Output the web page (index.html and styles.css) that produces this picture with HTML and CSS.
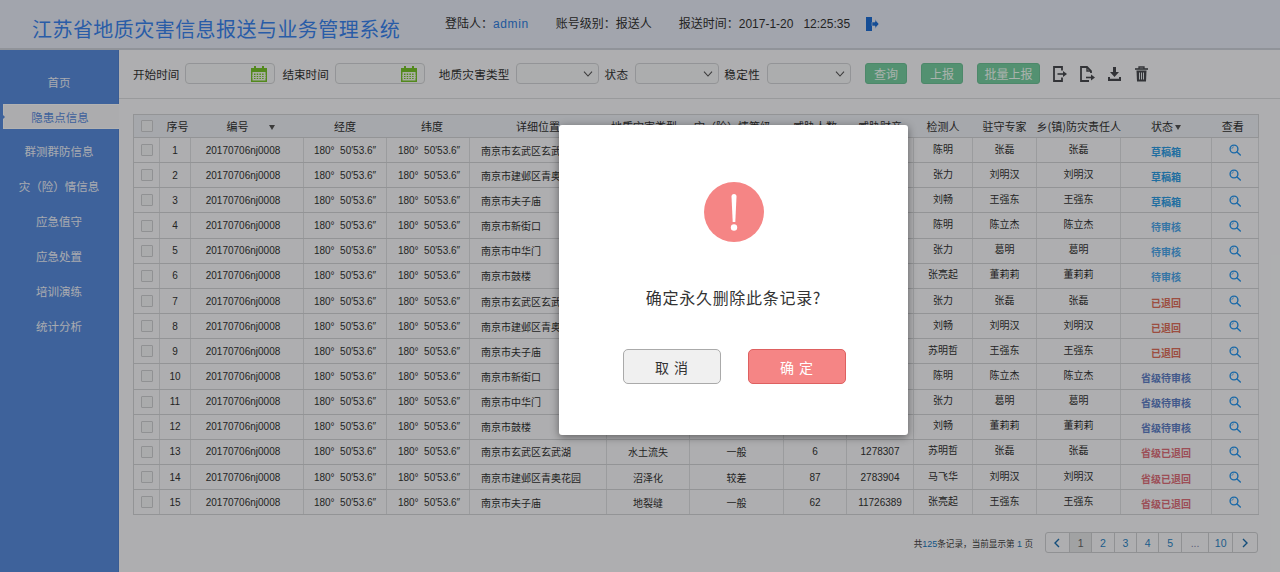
FILE: index.html
```html
<!DOCTYPE html>
<html lang="zh-CN">
<head>
<meta charset="utf-8">
<title>江苏省地质灾害信息报送与业务管理系统</title>
<link rel="stylesheet" href="styles.css">
</head>
<body>
<div class="page">
  <header class="top">
    <h1 class="title">江苏省地质灾害信息报送与业务管理系统</h1>
    <div class="meta tight">登陆人：<span class="blue">admin</span></div>
    <div class="meta tight">账号级别：报送人</div>
    <div class="meta">报送时间：2017-1-20&nbsp;&nbsp;&nbsp;12:25:35</div>
    <svg class="logout" viewBox="0 0 14 14" width="14" height="14"><path d="M1 0h6v14H1z" fill="#1f6fd6"/><path d="M7 5h3V2.500L14 7l-4 4.500V9H7z" fill="#1f6fd6" stroke="#e9edf8" stroke-width=".6"/></svg>
  </header>
  <div class="body">
    <nav class="side">
      <a class="item">首页</a>
      <a class="item active">隐患点信息</a>
      <a class="item">群测群防信息</a>
      <a class="item">灾（险）情信息</a>
      <a class="item">应急值守</a>
      <a class="item">应急处置</a>
      <a class="item">培训演练</a>
      <a class="item">统计分析</a>
    </nav>
    <main class="main">
      <div class="tools">
        <label class="lbl">开始时间</label>
        <div class="field date"><svg class="cal" viewBox="0 0 16 16" width="16" height="16"><use href="#cal"/></svg></div>
        <label class="lbl">结束时间</label>
        <div class="field date"><svg class="cal" viewBox="0 0 16 16" width="16" height="16"><use href="#cal"/></svg></div>
        <label class="lbl wide">地质灾害类型</label>
        <div class="field sel"><svg class="chev" viewBox="0 0 10 6" width="10" height="6"><path d="M1 .7 5 5 9 .7" fill="none" stroke="#555" stroke-width="1.100"/></svg></div>
        <label class="lbl">状态</label>
        <div class="field sel"><svg class="chev" viewBox="0 0 10 6" width="10" height="6"><path d="M1 .7 5 5 9 .7" fill="none" stroke="#555" stroke-width="1.100"/></svg></div>
        <label class="lbl">稳定性</label>
        <div class="field sel"><svg class="chev" viewBox="0 0 10 6" width="10" height="6"><path d="M1 .7 5 5 9 .7" fill="none" stroke="#555" stroke-width="1.100"/></svg></div>
        <button class="btn first">查询</button>
        <button class="btn">上报</button>
        <button class="btn long">批量上报</button>
        <svg class="tool" viewBox="0 0 15 16" width="15" height="16"><path d="M9 4.500V1H1v14h8v-3.500" fill="none" stroke="#484a4f" stroke-width="1.800"/><path d="M4.500 8H12" stroke="#484a4f" stroke-width="1.600"/><path d="m10 5 4 3-4 3z" fill="#484a4f"/></svg>
        <svg class="tool" viewBox="0 0 15 16" width="15" height="16"><path d="M9 15H1V1h6l4 4v2" fill="none" stroke="#484a4f" stroke-width="1.800"/><path d="M7 1v4h4" fill="none" stroke="#484a4f" stroke-width="1.400"/><path d="M6 11.500h6" stroke="#484a4f" stroke-width="1.600"/><path d="m11 8.500 4 3-4 3z" fill="#484a4f"/></svg>
        <svg class="tool" viewBox="0 0 15 16" width="15" height="16"><path d="M6 1h3v5h3l-4.500 5L3 6h3z" fill="#484a4f"/><path d="M1 11v4h13v-4h-2v1.800H3V11z" fill="#484a4f"/></svg>
        <svg class="tool" viewBox="0 0 15 16" width="15" height="16"><path d="M1 3h13" stroke="#484a4f" stroke-width="1.600"/><path d="M5 3V1h5v2" fill="none" stroke="#484a4f" stroke-width="1.300"/><path d="M2.500 4.500h10L12 15.500H3z" fill="#484a4f"/><path d="M5.500 6.500v7M7.500 6.500v7M9.500 6.500v7" stroke="#e9edf0" stroke-width="1"/></svg>
      </div>
      <div class="content">
        <table class="grid">
          <colgroup>
            <col class="c1"><col class="c2"><col class="c3"><col class="c4"><col class="c5"><col class="c6"><col class="c7"><col class="c8"><col class="c9"><col class="c10"><col class="c11"><col class="c12"><col class="c13"><col class="c14"><col class="c15">
          </colgroup>
          <thead>
            <tr>
              <th><span class="check"></span></th><th class="h-seq">序号</th><th><span class="gap-arrow">编号</span><i class="arrow"></i></th><th>经度</th><th class="h-lat">纬度</th><th>详细位置</th><th>地质灾害类型<i class="arrow near"></i></th><th>灾（险）情等级<i class="arrow near"></i></th><th>威胁人数</th><th>威胁财产</th><th>检测人</th><th>驻守专家</th><th>乡(镇)防灾责任人</th><th>状态<i class="arrow near"></i></th><th class="h-view">查看</th>
            </tr>
          </thead>
          <tbody>
            <tr><td><span class="check"></span></td><td>1</td><td>20170706nj0008</td><td>180° &nbsp;50′53.6″</td><td>180° &nbsp;50′53.6″</td><td>南京市玄武区玄武湖</td><td>水土流失</td><td>一般</td><td>6</td><td>1278307</td><td>陈明</td><td>张磊</td><td>张磊</td><td class="s1">草稿箱</td><td><svg class="find"><use href="#find"/></svg></td></tr>
            <tr><td><span class="check"></span></td><td>2</td><td>20170706nj0008</td><td>180° &nbsp;50′53.6″</td><td>180° &nbsp;50′53.6″</td><td>南京市建邺区青奥花园</td><td>沼泽化</td><td>较差</td><td>87</td><td>2783904</td><td>张力</td><td>刘明汉</td><td>刘明汉</td><td class="s1">草稿箱</td><td><svg class="find"><use href="#find"/></svg></td></tr>
            <tr><td><span class="check"></span></td><td>3</td><td>20170706nj0008</td><td>180° &nbsp;50′53.6″</td><td>180° &nbsp;50′53.6″</td><td>南京市夫子庙</td><td>地裂缝</td><td>一般</td><td>62</td><td>11726389</td><td>刘畅</td><td>王强东</td><td>王强东</td><td class="s1">草稿箱</td><td><svg class="find"><use href="#find"/></svg></td></tr>
            <tr><td><span class="check"></span></td><td>4</td><td>20170706nj0008</td><td>180° &nbsp;50′53.6″</td><td>180° &nbsp;50′53.6″</td><td>南京市新街口</td><td>水土流失</td><td>一般</td><td>6</td><td>1278307</td><td>陈明</td><td>陈立杰</td><td>陈立杰</td><td class="s2">待审核</td><td><svg class="find"><use href="#find"/></svg></td></tr>
            <tr><td><span class="check"></span></td><td>5</td><td>20170706nj0008</td><td>180° &nbsp;50′53.6″</td><td>180° &nbsp;50′53.6″</td><td>南京市中华门</td><td>沼泽化</td><td>较差</td><td>87</td><td>2783904</td><td>张力</td><td>葛明</td><td>葛明</td><td class="s2">待审核</td><td><svg class="find"><use href="#find"/></svg></td></tr>
            <tr><td><span class="check"></span></td><td>6</td><td>20170706nj0008</td><td>180° &nbsp;50′53.6″</td><td>180° &nbsp;50′53.6″</td><td>南京市鼓楼</td><td>地裂缝</td><td>一般</td><td>62</td><td>11726389</td><td>张亮起</td><td>董莉莉</td><td>董莉莉</td><td class="s2">待审核</td><td><svg class="find"><use href="#find"/></svg></td></tr>
            <tr><td><span class="check"></span></td><td>7</td><td>20170706nj0008</td><td>180° &nbsp;50′53.6″</td><td>180° &nbsp;50′53.6″</td><td>南京市玄武区玄武湖</td><td>水土流失</td><td>一般</td><td>6</td><td>1278307</td><td>张力</td><td>张磊</td><td>张磊</td><td class="s3">已退回</td><td><svg class="find"><use href="#find"/></svg></td></tr>
            <tr><td><span class="check"></span></td><td>8</td><td>20170706nj0008</td><td>180° &nbsp;50′53.6″</td><td>180° &nbsp;50′53.6″</td><td>南京市建邺区青奥花园</td><td>沼泽化</td><td>较差</td><td>87</td><td>2783904</td><td>刘畅</td><td>刘明汉</td><td>刘明汉</td><td class="s3">已退回</td><td><svg class="find"><use href="#find"/></svg></td></tr>
            <tr><td><span class="check"></span></td><td>9</td><td>20170706nj0008</td><td>180° &nbsp;50′53.6″</td><td>180° &nbsp;50′53.6″</td><td>南京市夫子庙</td><td>地裂缝</td><td>一般</td><td>62</td><td>11726389</td><td>苏明哲</td><td>王强东</td><td>王强东</td><td class="s3">已退回</td><td><svg class="find"><use href="#find"/></svg></td></tr>
            <tr><td><span class="check"></span></td><td>10</td><td>20170706nj0008</td><td>180° &nbsp;50′53.6″</td><td>180° &nbsp;50′53.6″</td><td>南京市新街口</td><td>水土流失</td><td>一般</td><td>6</td><td>1278307</td><td>陈明</td><td>陈立杰</td><td>陈立杰</td><td class="s4">省级待审核</td><td><svg class="find"><use href="#find"/></svg></td></tr>
            <tr><td><span class="check"></span></td><td>11</td><td>20170706nj0008</td><td>180° &nbsp;50′53.6″</td><td>180° &nbsp;50′53.6″</td><td>南京市中华门</td><td>沼泽化</td><td>较差</td><td>87</td><td>2783904</td><td>张力</td><td>葛明</td><td>葛明</td><td class="s4">省级待审核</td><td><svg class="find"><use href="#find"/></svg></td></tr>
            <tr><td><span class="check"></span></td><td>12</td><td>20170706nj0008</td><td>180° &nbsp;50′53.6″</td><td>180° &nbsp;50′53.6″</td><td>南京市鼓楼</td><td>地裂缝</td><td>一般</td><td>62</td><td>11726389</td><td>刘畅</td><td>董莉莉</td><td>董莉莉</td><td class="s4">省级待审核</td><td><svg class="find"><use href="#find"/></svg></td></tr>
            <tr><td><span class="check"></span></td><td>13</td><td>20170706nj0008</td><td>180° &nbsp;50′53.6″</td><td>180° &nbsp;50′53.6″</td><td>南京市玄武区玄武湖</td><td>水土流失</td><td>一般</td><td>6</td><td>1278307</td><td>苏明哲</td><td>张磊</td><td>张磊</td><td class="s5">省级已退回</td><td><svg class="find"><use href="#find"/></svg></td></tr>
            <tr><td><span class="check"></span></td><td>14</td><td>20170706nj0008</td><td>180° &nbsp;50′53.6″</td><td>180° &nbsp;50′53.6″</td><td>南京市建邺区青奥花园</td><td>沼泽化</td><td>较差</td><td>87</td><td>2783904</td><td>马飞华</td><td>刘明汉</td><td>刘明汉</td><td class="s5">省级已退回</td><td><svg class="find"><use href="#find"/></svg></td></tr>
            <tr><td><span class="check"></span></td><td>15</td><td>20170706nj0008</td><td>180° &nbsp;50′53.6″</td><td>180° &nbsp;50′53.6″</td><td>南京市夫子庙</td><td>地裂缝</td><td>一般</td><td>62</td><td>11726389</td><td>张亮起</td><td>王强东</td><td>王强东</td><td class="s5">省级已退回</td><td><svg class="find"><use href="#find"/></svg></td></tr>
          </tbody>
        </table>
        <div class="foot">
          <span class="count">共<b>125</b>条记录，当前显示第 <b>1</b> 页</span>
          <div class="pager">
            <a class="pg w24"><svg viewBox="0 0 8 10" width="8" height="10"><path d="M6 1 2 5l4 4" fill="none" stroke="#1c6fb0" stroke-width="1.400"/></svg></a>
            <a class="pg on">1</a><a class="pg">2</a><a class="pg">3</a><a class="pg">4</a><a class="pg">5</a><a class="pg dots">...</a><a class="pg w24">10</a>
            <a class="pg w24"><svg viewBox="0 0 8 10" width="8" height="10"><path d="m2 1 4 4-4 4" fill="none" stroke="#1c6fb0" stroke-width="1.400"/></svg></a>
          </div>
        </div>
      </div>
    </main>
  </div>
  <svg class="defs" width="0" height="0">
    <defs>
      <symbol id="cal" viewBox="0 0 16 16">
        <path d="M0 2h16v14H0z" fill="#77c52a"/><path d="M3 0h2v3H3zM11 0h2v3h-2z" fill="#77c52a"/>
        <path d="M1.500 6h13v8.500h-13z" fill="#f3f8ea"/>
        <path d="M3 7.500h1.500V13H3zM5.700 7.500h1.500V13H5.700zM8.400 7.500h1.500V13H8.400zM11.100 7.500h1.500V13h-1.500z" fill="#77c52a"/>
        <path d="M1.500 9h13v1h-13zM1.500 11h13v1h-13z" fill="#f3f8ea"/>
      </symbol>
      <symbol id="find" viewBox="0 0 12 12">
        <circle cx="5" cy="5" r="3.900" fill="none" stroke="#2596f0" stroke-width="1.400"/>
        <path d="m8 8 3.300 3" stroke="#2596f0" stroke-width="1.400" stroke-linecap="round"/>
        <path d="M2.800 5a2.200 2.200 0 0 1 2.200-2.200" fill="none" stroke="#2596f0" stroke-width=".6"/>
      </symbol>
    </defs>
  </svg>
  <div class="mask">
    <div class="dialog">
      <svg class="warn" viewBox="0 0 60 60" width="60" height="60"><circle cx="30" cy="30" r="30" fill="#f58585"/><path d="M27.500 14.500a2.500 2.500 0 0 1 5 0L31.300 40h-2.600z" fill="#fff"/><circle cx="30" cy="45.500" r="3.200" fill="#fff"/></svg>
      <p class="ask">确定永久删除此条记录?</p>
      <div class="acts">
        <button class="dbtn cancel">取 消</button>
        <button class="dbtn ok">确 定</button>
      </div>
    </div>
  </div>
</div>
</body>
</html>
```

FILE: styles.css
```css
* { box-sizing: border-box; }
html, body { margin: 0; padding: 0; height: 100%; }
body {
  font-family: "Liberation Sans", "Noto Sans CJK SC", sans-serif;
  font-size: 12px;
  color: #333;
  overflow: hidden;
}
.page { position: relative; width: 1280px; height: 572px; overflow: hidden; background: #f9fafc; display: flex; flex-direction: column; }
.defs { position: absolute; }

.top {
  height: 50px;
  flex: none;
  background: #e9edf8;
  border-bottom: 2px solid #cfd3dc;
  display: flex;
  align-items: center;
  padding-left: 32px;
}
.title { margin: 10px 0 0; font-size: 20px; font-weight: 400; letter-spacing: .45px; color: #3b85f0; width: 413px; flex: none; font-family: "Noto Sans CJK SC", sans-serif; line-height: 30px; }
.meta { margin: 0 29px 0 0; font-size: 12px; line-height: 18px; color: #333; white-space: nowrap; }
.meta.tight { margin-right: 27px; }
.blue { color: #2f7fe0; letter-spacing: .6px; }
.logout { margin: 0 0 0 -14px; }

.body { flex: 1; display: flex; min-height: 0; }
.side { width: 119px; flex: none; background: #5a8ddf; padding-top: 14px; display: flex; flex-direction: column; border-right: 1px solid #5384d3; }
.item { height: 35px; display: flex; align-items: center; justify-content: center; color: #f0f4fb; font-size: 11.5px; }
.item.active {
  height: 25px;
  margin: 5px -1px 4px 3px;
  background: #f6f7f9;
  color: #5a8ddf;
  border: solid #fff;
  border-width: 1px 0 1px 1px;
  position: relative;
  padding-right: 3px;
}
.item.active::before {
  content: "";
  position: absolute;
  left: -2px;
  top: 9px;
  border: 3px solid transparent;
  border-left: 3px solid #5a8ddf;
}

.main { flex: 1; min-width: 0; display: flex; flex-direction: column; }
.tools {
  height: 49px;
  border-bottom: 1px solid #dcdde0;
  display: flex;
  align-items: center;
  padding: 0 0 1px 14px;
  flex: none;
}
.lbl { font-size: 11.6px; margin-right: 6px; white-space: nowrap; }
.lbl.wide { margin-left: 7px; letter-spacing: .2px; }
.sel + .lbl { letter-spacing: .3px; margin-right: 7px; }
.field { height: 21px; border: 1px solid #d3d5d8; border-radius: 4px; display: flex; align-items: center; justify-content: flex-end; background: #f7f8fa; flex: none; }
.date { width: 90px; padding-right: 7px; margin-right: 7px; }
.sel { width: 83.500px; padding-right: 5px; margin-right: 5.500px; }
.cal { display: block; }
.btn { height: 21px; width: 42px; border: 1px solid #6fc398; border-radius: 3px; background: #78d0a2; color: #f2fff8; font: 12px "Noto Sans CJK SC", sans-serif; padding: 0; margin-right: 14px; flex: none; }
.btn.first { margin-left: 9px; }
.btn.long { width: 63px; margin-right: 13px; }
.tool { margin-right: 12px; flex: none; }

.content { padding: 15px 22px 0 14px; }
.grid { width: 1125px; table-layout: fixed; border-collapse: collapse; border: 1px solid #d3d4d7; }
.c1 { width: 26px; } .c2 { width: 31px; } .c3 { width: 113px; } .c4 { width: 83px; } .c5 { width: 83px; }
.c6 { width: 137px; } .c7 { width: 83px; } .c8 { width: 94px; } .c9 { width: 63px; } .c10 { width: 67px; }
.c11 { width: 59px; } .c12 { width: 64px; } .c13 { width: 84px; } .c14 { width: 91px; } .c15 { width: 47px; }
.grid th { height: 23px; background: #eef1f7; font-weight: 400; font-size: 11px; border-bottom: 1px solid #d3d4d7; padding: 0; white-space: nowrap; color: #333; font-family: "Noto Sans CJK SC", sans-serif; }
.grid td { height: 25.170px; padding: 0; text-align: center; font-size: 10px; border-bottom: 1px solid #d3d4d7; border-right: 1px solid #dfe0e3; white-space: nowrap; overflow: hidden; color: #333; }
.grid td:nth-child(6) { text-align: left; padding-left: 11px; }
.grid td:nth-child(3) { padding-right: 8px; }
.grid td:nth-child(5) { padding-left: 2px; }
.grid td:nth-child(n+11):nth-child(-n+13) { padding-bottom: 4px; }
.grid td:nth-child(14) { padding-top: 2px; }
.grid .h-seq { padding-left: 5px; }
.grid .h-lat { padding-left: 8px; }
.grid .h-view { padding-right: 4px; }
.check { display: block; width: 12px; height: 12px; margin: 0 auto; border: 1px solid #cfd0d3; border-radius: 1px; background: #f4f5f7; }
.arrow { display: inline-block; width: 0; height: 0; border: 3px solid transparent; border-top: 5px solid #555; border-bottom: 0; margin-left: 20px; vertical-align: 1px; }
.arrow.near { margin-left: 2px; }
.gap-arrow { margin-left: 7px; }
.find { width: 12px; height: 12px; display: inline-block; vertical-align: middle; }
.grid td.s1 { color: #2f9ee6; font-weight: 700; }
.grid td.s2 { color: #4ea8ec; font-weight: 700; }
.grid td.s3 { color: #e0705c; font-weight: 700; }
.grid td.s4 { color: #6080c8; font-weight: 700; }
.grid td.s5 { color: #e0707c; font-weight: 700; }

.foot { display: flex; justify-content: flex-end; align-items: center; margin-top: 17px; height: 21px; }
.count { font-size: 8.600px; margin-right: 12px; color: #444; white-space: nowrap; }
.count b { font-weight: 400; color: #2079c0; font-size: 9px; }
.pager { display: flex; height: 21px; width: 213px; border: 1px solid #cfd0d3; border-radius: 3px; overflow: hidden; flex: none; }
.pg { width: 22.500px; display: flex; align-items: center; justify-content: center; border-right: 1px solid #cfd0d3; color: #2d86c8; font-size: 10.500px; }
.pg:last-child { border-right: 0; }
.pg.on { background: #e7e8ea; color: #666; }
.pg.dots { width: 27.500px; color: #88a; }
.pg.w24 { width: 24px; }

.mask { position: absolute; inset: 0; background: rgba(0, 0, 0, .3); }
.dialog {
  position: absolute;
  left: 559px;
  top: 125px;
  width: 349px;
  height: 310px;
  background: #fff;
  border-radius: 3px;
  box-shadow: 0 2px 8px rgba(0, 0, 0, .45);
  display: flex;
  flex-direction: column;
  align-items: center;
  padding-top: 57px;
}
.warn { display: block; flex: none; }
.ask { margin: 43px 0 0; font: 16px/24px "Noto Sans CJK SC", sans-serif; letter-spacing: .7px; color: #333; }
.acts { display: flex; gap: 27px; margin: 40px 0 0 2px; }
.dbtn { width: 98px; height: 35px; border-radius: 5px; font: 14px "Noto Sans CJK SC", sans-serif; letter-spacing: 1px; padding: 0; }
.cancel { background: #f0f0f0; border: 1px solid #aaa; color: #333; }
.ok { background: #f58585; border: 1px solid #de6060; color: #fff; }
```
